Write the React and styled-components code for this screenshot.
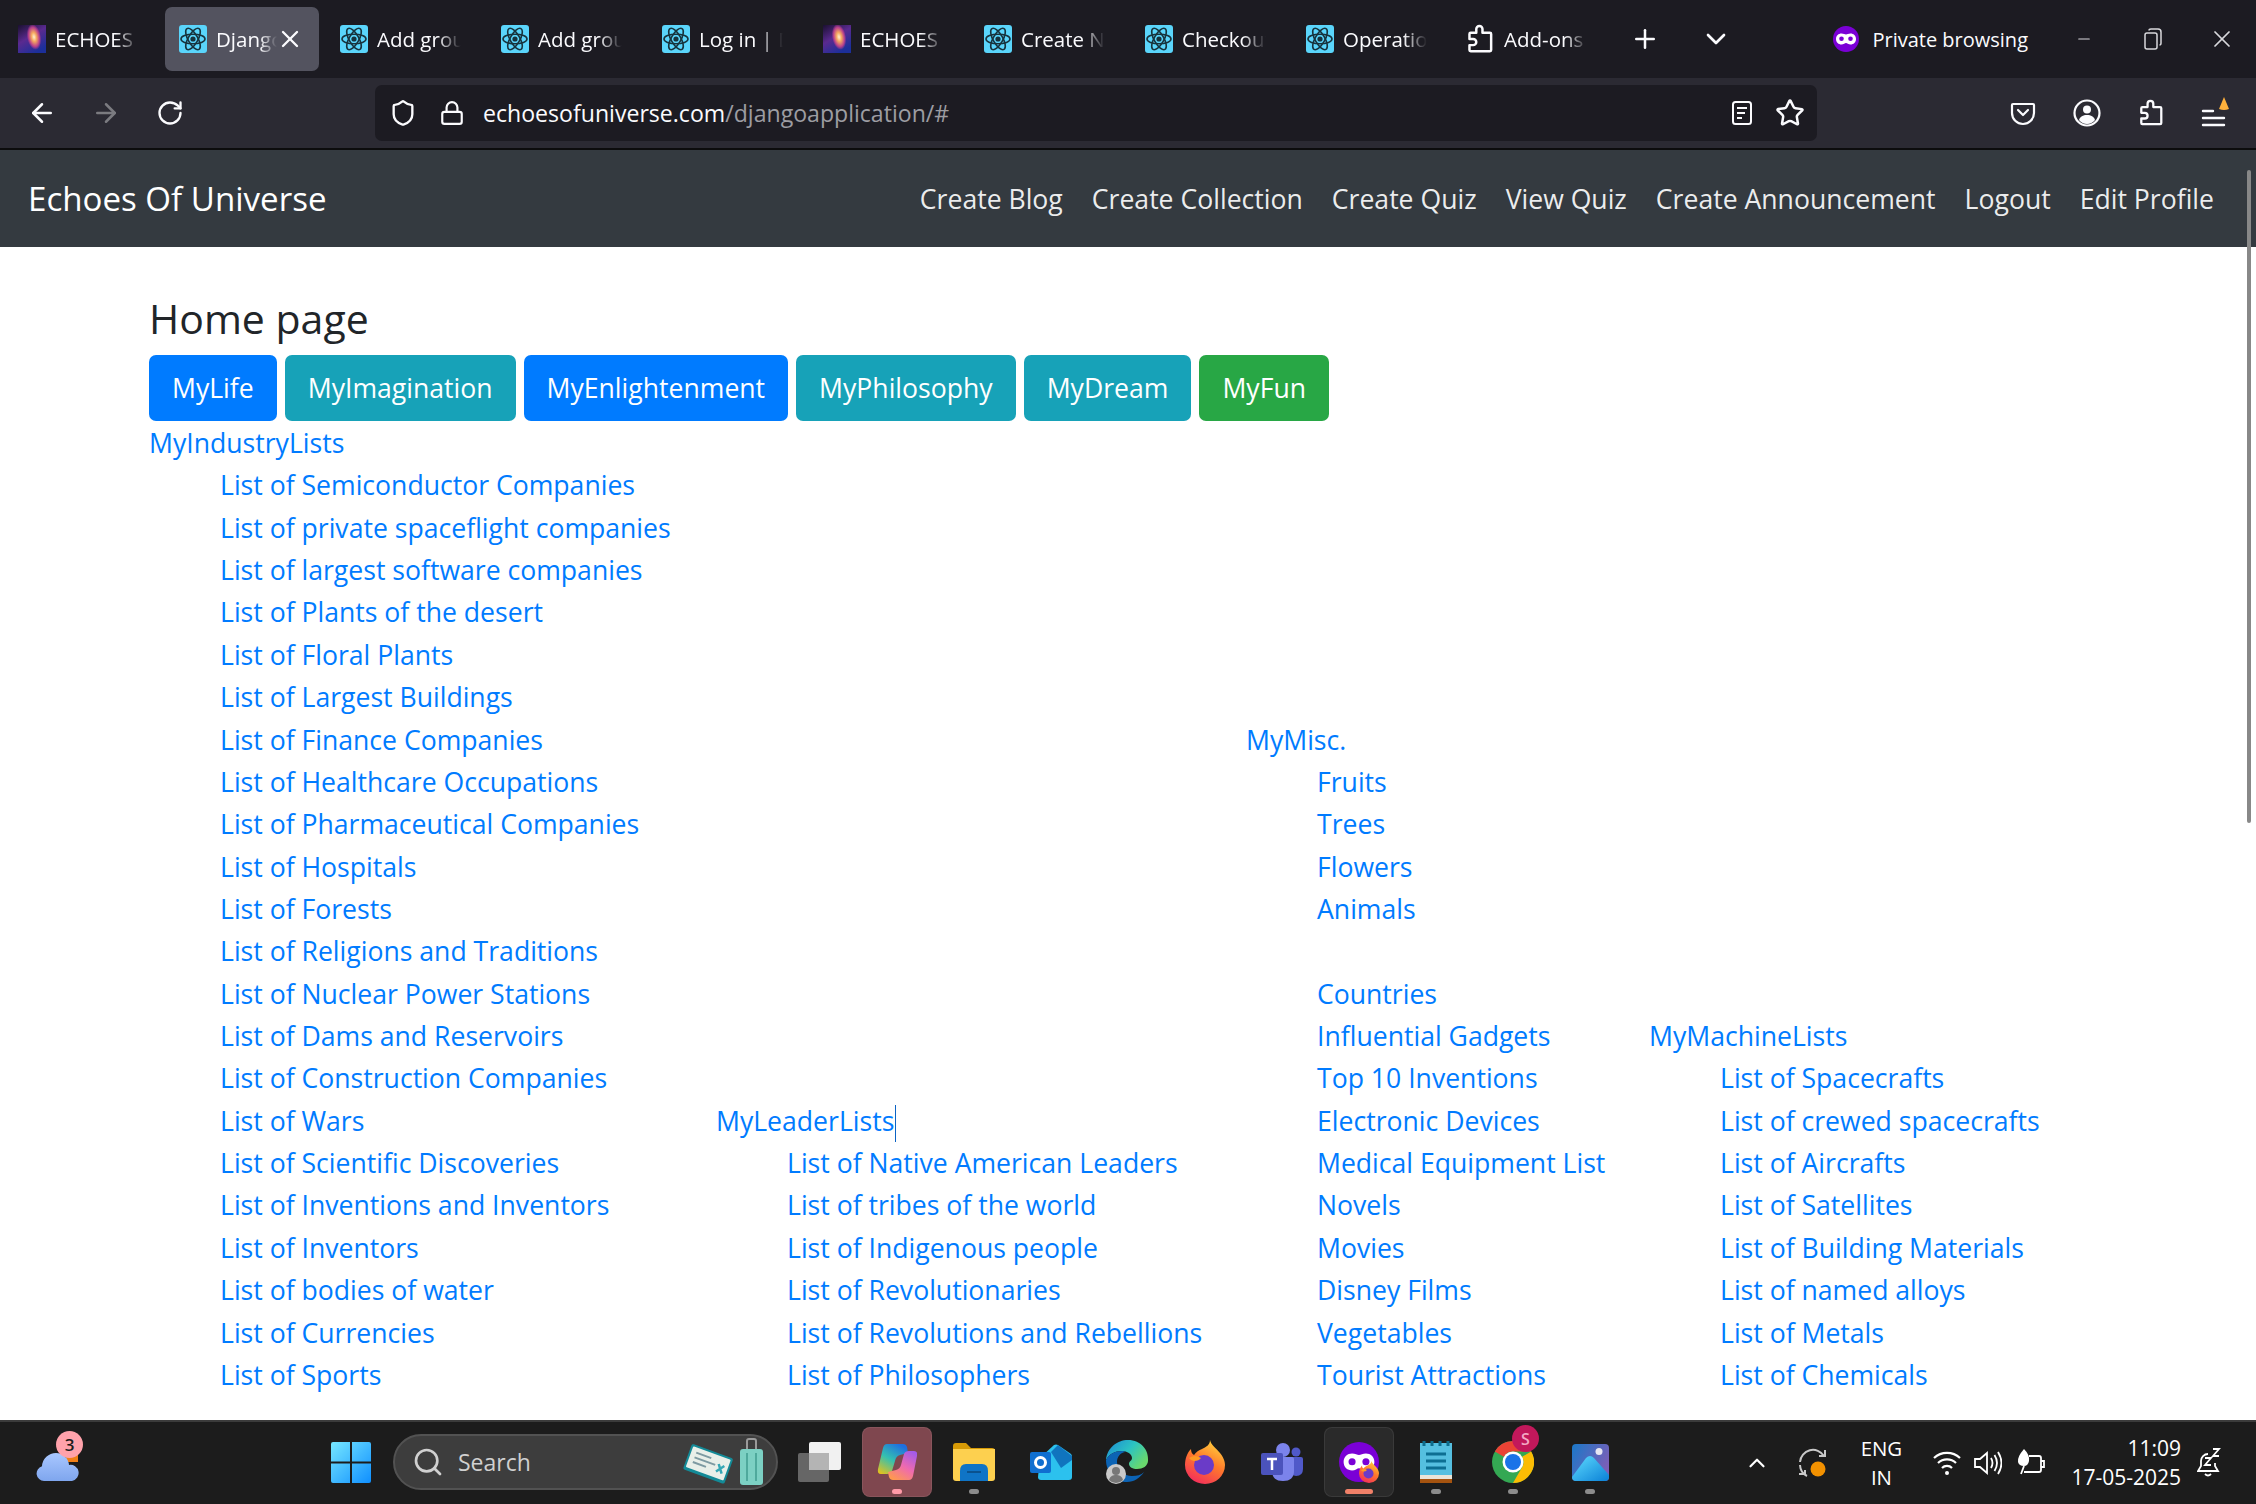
import styled, { createGlobalStyle } from 'styled-components';
import { ArrowLeft, ArrowRight, RotateCw, Shield, Lock, Star, Plus, ChevronDown, ChevronUp, X, Minus, Search } from 'lucide-react';

const Global = createGlobalStyle`
	html, body { margin: 0; padding: 0; background: #fff; }
	* { box-sizing: border-box; }
	body { font-family: "Open Sans", "Noto Sans", sans-serif; }
`;

const Screen = styled.div`
	position: relative;
	width: 2256px;
	height: 1504px;
	display: flex;
	flex-direction: column;
	overflow: hidden;
`;

/* browser chrome */
const TabBar = styled.div`
	height: 78px;
	flex: none;
	display: flex;
	align-items: flex-start;
	gap: 7px;
	padding: 7px 0 0 4px;
	background: #1c1b22;
	color: #fbfbfe;
`;
const Tab = styled.div`
	width: 154px;
	height: 64px;
	flex: none;
	display: flex;
	align-items: center;
	gap: ${(p) => (p.$wide ? '11px' : '9px')};
	padding-left: 14px;
	border-radius: 7px;
	background: ${(p) => (p.$active ? '#53535f' : 'transparent')};
	font-size: 20.5px;
`;
const TabTitle = styled.span`
	display: block;
	width: ${(p) => (p.$active ? '61px' : '84px')};
	overflow: hidden;
	white-space: nowrap;
	-webkit-mask-image: linear-gradient(to right, #000 72%, transparent 100%);
	mask-image: linear-gradient(to right, #000 72%, transparent 100%);
`;
const TabClose = styled.span`
	display: flex;
	margin-left: -10px;
`;
const BarButton = styled.div`
	width: ${(p) => p.$w || 64}px;
	height: ${(p) => p.$h || 64}px;
	flex: none;
	display: flex;
	align-items: center;
	justify-content: center;
	color: ${(p) => p.$color || '#fbfbfe'};
`;
const TabTools = styled.div`
	display: flex;
	align-items: center;
	height: 64px;
	margin-left: 6px;
`;
const Spacer = styled.div`
	flex: 1;
`;
const PrivateBadge = styled.div`
	display: flex;
	align-items: center;
	gap: 13px;
	height: 64px;
	margin-right: 14px;
	font-size: 20px;
`;
const WindowControls = styled.div`
	display: flex;
	height: 64px;
`;
const Toolbar = styled.div`
	height: 72px;
	flex: none;
	display: flex;
	align-items: center;
	padding: 0 9px 0 10px;
	background: #2b2a33;
	border-bottom: 2px solid #0c0c0d;
	color: #fbfbfe;
`;
const UrlBar = styled.div`
	width: 1442px;
	height: 56px;
	margin-left: 173px;
	display: flex;
	align-items: center;
	padding: 0 12px 0 14px;
	border-radius: 7px;
	background: #1c1b22;
`;
const LockSlot = styled.span`
	display: flex;
	margin-left: 22px;
`;
const UrlText = styled.div`
	margin-left: 18px;
	font-size: 23.1px;
	white-space: nowrap;
	span {
		color: #9d9da2;
	}
`;
const UrlIcons = styled.div`
	display: flex;
	align-items: center;
	gap: 22px;
	margin-left: auto;
`;
const ToolbarRight = styled.div`
	display: flex;
	margin-left: auto;
`;

/* site navbar */
const Navbar = styled.nav`
	height: 97px;
	flex: none;
	display: flex;
	align-items: center;
	justify-content: space-between;
	padding: 0 42px 0 28px;
	background: #343a40;
	color: #fff;
`;
const Brand = styled.a`
	font-size: 33.1px;
	color: #fff;
`;
const NavLinks = styled.div`
	display: flex;
	gap: 29px;
`;
const NavLink = styled.a`
	font-size: 26.6px;
	color: rgba(255, 255, 255, 0.92);
`;

/* page body */
const Main = styled.main`
	flex: 1;
	min-height: 0;
	padding: 41px 0 0 149px;
	background: #fff;
	overflow: hidden;
`;
const Title = styled.h3`
	margin: 0 0 7px;
	height: 60px;
	font-size: 41px;
	font-weight: 400;
	line-height: 60px;
	color: #212529;
`;
const ButtonRow = styled.div`
	display: flex;
	gap: 8px;
	margin-bottom: 1px;
`;
const Button = styled.a`
	height: 66px;
	display: flex;
	align-items: center;
	padding: 0 23px;
	border-radius: 7px;
	background: ${(p) => p.$bg};
	color: #fff;
	font-size: 26.6px;
`;
const Columns = styled.div`
	display: flex;
	align-items: flex-end;
`;
const Column = styled.div`
	width: ${(p) => p.$w}px;
	flex: none;
	font-size: 26.6px;
	line-height: 42.36px;
	color: #007bff;
`;
const ColumnHead = styled.a`
	display: block;
	height: 42.36px;
	color: #007bff;
	white-space: nowrap;
`;
const Caret = styled.span`
	display: inline-block;
	width: 1px;
	height: 37px;
	margin-left: 1px;
	vertical-align: middle;
	background: #0b63c4;
`;
const LinkList = styled.ul`
	margin: 0;
	padding: 0 0 0 71px;
	list-style: none;
`;
const LinkItem = styled.li`
	height: 42.36px;
	white-space: nowrap;
`;
const Scrollbar = styled.div`
	position: absolute;
	top: 170px;
	right: 5px;
	width: 4px;
	height: 653px;
	border-radius: 2px;
	background: #888;
`;

/* windows taskbar */
const Taskbar = styled.div`
	height: 84px;
	flex: none;
	display: flex;
	align-items: center;
	border-top: 2px solid #3b3b3b;
	background: #1c1c1c;
	color: #fff;
`;
const WeatherSlot = styled.div`
	position: relative;
	width: 316px;
	flex: none;
	padding: 12px 0 0 36px;
`;
const WeatherBadge = styled.span`
	position: absolute;
	top: -9px;
	left: 56px;
	width: 27px;
	height: 27px;
	border-radius: 50%;
	display: flex;
	align-items: center;
	justify-content: center;
	background: #ffa2ab;
	color: #1c1c1c;
	font-size: 17px;
	font-weight: 600;
`;
const TaskGroup = styled.div`
	display: flex;
	align-items: center;
	gap: 7px;
	margin-top: -2px;
`;
const TaskSlot = styled.div`
	position: relative;
	width: 70px;
	height: 70px;
	display: flex;
	align-items: center;
	justify-content: center;
	border-radius: 8px;
	background: ${(p) => p.$bg || 'transparent'};
	border: 1px solid ${(p) => (p.$bg ? '#ffffff14' : 'transparent')};
`;
const Pip = styled.span`
	position: absolute;
	bottom: 2px;
	left: 50%;
	width: ${(p) => p.$w || 10}px;
	height: 5px;
	margin-left: ${(p) => -(p.$w || 10) / 2}px;
	border-radius: 3px;
	background: ${(p) => p.$color || '#8c8c8c'};
`;
const SearchBox = styled.div`
	position: relative;
	width: 385px;
	height: 56px;
	display: flex;
	align-items: center;
	gap: 14px;
	padding-left: 17px;
	border: 2px solid #525252;
	border-radius: 28px;
	background: #3d3d3d;
	color: #d0d0d0;
	font-size: 23px;
`;
const SearchArt = styled.span`
	position: absolute;
	right: 10px;
	top: 2px;
	display: flex;
`;
const Tray = styled.div`
	margin-left: auto;
	display: flex;
	align-items: center;
	padding-right: 35px;
`;
const TrayIcon = styled.span`
	display: flex;
	margin-left: ${(p) => p.$ml || 0}px;
`;
const LangBox = styled.div`
	width: 60px;
	margin-left: 25px;
	text-align: center;
	font-size: 20.4px;
	line-height: 29px;
`;
const Clock = styled.div`
	margin-left: 26px;
	text-align: right;
	font-size: 21px;
	line-height: 29px;
	white-space: nowrap;
`;
const ChromeBadge = styled.span`
	position: absolute;
	top: -3px;
	right: 8px;
	width: 27px;
	height: 27px;
	border-radius: 50%;
	display: flex;
	align-items: center;
	justify-content: center;
	background: #c2185b;
	color: #f3a9c4;
	font-size: 16px;
	font-weight: 600;
`;
const MaskOverlay = styled.span`
	position: absolute;
	right: 14px;
	bottom: 13px;
	display: flex;
`;

const Atom = () => (
	<svg width="28" height="28" viewBox="0 0 28 28" style={{ flex: 'none' }}>
		<rect width="28" height="28" rx="3" fill="#5ad5fb" />
		<g fill="none" stroke="#17333d" strokeWidth="1.6">
			<ellipse cx="14" cy="14" rx="12" ry="4.8" />
			<ellipse cx="14" cy="14" rx="12" ry="4.8" transform="rotate(60 14 14)" />
			<ellipse cx="14" cy="14" rx="12" ry="4.8" transform="rotate(120 14 14)" />
		</g>
		<circle cx="14" cy="14" r="2.6" fill="#17333d" />
	</svg>
);

const Galaxy = () => (
	<svg width="28" height="28" viewBox="0 0 28 28" style={{ flex: 'none' }}>
		<defs>
			<linearGradient id="galbg" x1="0" y1="0" x2="0.6" y2="1">
				<stop offset="0" stopColor="#1a1030" />
				<stop offset="0.5" stopColor="#5a2a90" />
				<stop offset="1" stopColor="#1c2f9a" />
			</linearGradient>
			<radialGradient id="gal" cx="0.5" cy="0.5" r="0.5">
				<stop offset="0" stopColor="#fff2d0" />
				<stop offset="0.35" stopColor="#f5a860" />
				<stop offset="0.75" stopColor="#b8408c" />
				<stop offset="1" stopColor="#b8408c" stopOpacity="0" />
			</radialGradient>
		</defs>
		<rect width="28" height="28" fill="url(#galbg)" />
		<ellipse cx="16" cy="12" rx="7" ry="13" fill="url(#gal)" transform="rotate(-10 16 12)" />
	</svg>
);

const Puzzle = ({ size = 26 }) => (
	<svg width={size} height={size * 1.15} viewBox="0 0 21 24" fill="none" stroke="#fbfbfe" strokeWidth="2" strokeLinejoin="round" style={{ flex: 'none' }}>
		<path d="M7.5 7V4a2.5 2.5 0 0 1 5 0v3h6a1 1 0 0 1 1 1v13a1 1 0 0 1-1 1H3a1 1 0 0 1-1-1v-4h3a2.5 2.5 0 0 0 0-5H2V8a1 1 0 0 1 1-1z" />
	</svg>
);

const Mask = ({ size = 26 }) => (
	<svg width={size} height={size} viewBox="0 0 26 26" style={{ flex: 'none' }}>
		<circle cx="13" cy="13" r="13" fill="#7a00d6" />
		<path d="M3 13c0-3.400 2.500-5.500 5.500-5.500 2 0 3.400 1 4.500 1s2.500-1 4.500-1c3 0 5.500 2.100 5.500 5.500s-2.500 5.500-5.500 5.500c-2 0-3.400-1.500-4.500-1.500S10.500 18.500 8.500 18.500C5.500 18.500 3 16.400 3 13z" fill="#fff" />
		<circle cx="8.500" cy="12.800" r="2.300" fill="#7a00d6" />
		<circle cx="17.500" cy="12.800" r="2.300" fill="#7a00d6" />
	</svg>
);

const Reader = () => (
	<svg width="22" height="26" viewBox="0 0 22 26" fill="none" stroke="#fbfbfe" strokeWidth="2">
		<rect x="2" y="2" width="18" height="22" rx="2.500" />
		<path d="M6 8h10M6 13h8M6 18h5" />
	</svg>
);

const Pocket = () => (
	<svg width="26" height="26" viewBox="0 0 26 26" fill="none" stroke="#fbfbfe" strokeWidth="2.200" strokeLinecap="round" strokeLinejoin="round">
		<path d="M3 4h20a1 1 0 0 1 1 1v8a11 11 0 0 1-22 0V5a1 1 0 0 1 1-1z" />
		<path d="M8 10l5 5 5-5" />
	</svg>
);

const Profile = () => (
	<svg width="28" height="28" viewBox="0 0 28 28" fill="none" stroke="#fbfbfe" strokeWidth="2.200">
		<circle cx="14" cy="14" r="12.500" />
		<circle cx="14" cy="10.500" r="4" fill="#fbfbfe" stroke="none" />
		<path d="M6 21c1-3.500 4-5 8-5s7 1.500 8 5c-2 2.500-5 4-8 4s-6-1.500-8-4z" fill="#fbfbfe" stroke="none" />
	</svg>
);

const MenuIcon = () => (
	<svg width="30" height="34" viewBox="0 0 30 34">
		<path d="M3 15h10M3 22h21M3 29h21" stroke="#fbfbfe" strokeWidth="2.400" strokeLinecap="round" />
		<path d="M19 13L24 1l5 12q-5 2-10 0z" fill="#ffb13c" />
	</svg>
);

const RestoreIcon = () => (
	<svg width="18" height="22" viewBox="0 0 18 22" fill="none" stroke="#d8d8dc" strokeWidth="1.500">
		<rect x="1" y="5" width="12" height="16" rx="2" />
		<path d="M5 2.500q0-1.500 2-1.500h7q3 0 3 3v11q0 2-1.500 2" />
	</svg>
);

const WinLogo = () => (
	<svg width="40" height="41" viewBox="0 0 40 41">
		<defs>
			<linearGradient id="win" x1="0" y1="0" x2="1" y2="1">
				<stop offset="0" stopColor="#76e7ff" />
				<stop offset="1" stopColor="#0f8fff" />
			</linearGradient>
		</defs>
		<path d="M0 2q0-2 2-2h17v19.500H0zM21 0h17q2 0 2 2v17.500H21zM0 21.500h19V41H2q-2 0-2-2zM21 21.500h19V39q0 2-2 2H21z" fill="url(#win)" />
	</svg>
);

const TravelArt = () => (
	<svg width="84" height="48" viewBox="0 0 84 48">
		<g transform="rotate(20 25 26)">
			<rect x="4" y="12" width="44" height="27" rx="2" fill="#138a97" />
			<rect x="6" y="14" width="40" height="22" rx="1" fill="#e8efe9" />
			<path d="M11 19h16M11 24h22M11 29h14" stroke="#7d9aa2" strokeWidth="2" />
			<path d="M36 22l6 8M42 22l-6 8" stroke="#35a7b5" strokeWidth="2.500" />
		</g>
		<rect x="58" y="11" width="23" height="36" rx="3" fill="#7cd0c3" />
		<path d="M65 11V3q0-2 2-2h5q2 0 2 2v8" fill="none" stroke="#9a9a9a" strokeWidth="2" />
		<path d="M65 15v28M74 15v28" stroke="#4fa99c" strokeWidth="2" />
	</svg>
);

const WeatherIcon = () => (
	<svg width="44" height="30" viewBox="0 0 44 30">
		<defs>
			<linearGradient id="cloud" x1="0" y1="0" x2="0" y2="1">
				<stop offset="0" stopColor="#a9c7ff" />
				<stop offset="1" stopColor="#7fa6ee" />
			</linearGradient>
		</defs>
		<rect x="30" y="0" width="12" height="10" fill="#f07f17" />
		<path d="M8 29a7.500 7.500 0 0 1-2-14.700A14 14 0 0 1 20 1a13 13 0 0 1 13 12 8 8 0 0 1 3 16z" fill="url(#cloud)" />
	</svg>
);

const TaskViewIcon = () => (
	<svg width="44" height="40" viewBox="0 0 44 40">
		<rect x="0" y="11" width="31" height="29" rx="2" fill="#666" />
		<rect x="11" y="0" width="32" height="28" rx="2" fill="#f1f1f1" />
		<rect x="11" y="11" width="20" height="17" fill="#b4b4b4" />
	</svg>
);

const CopilotIcon = () => (
	<svg width="40" height="38" viewBox="0 0 40 38">
		<defs>
			<linearGradient id="cpa" x1="0.7" y1="0" x2="0.1" y2="1">
				<stop offset="0" stopColor="#1f6fe0" />
				<stop offset="0.5" stopColor="#34c0b0" />
				<stop offset="1" stopColor="#e6c21a" />
			</linearGradient>
			<linearGradient id="cpb" x1="0.8" y1="0" x2="0.2" y2="1">
				<stop offset="0" stopColor="#a35be8" />
				<stop offset="0.5" stopColor="#ee6ab0" />
				<stop offset="1" stopColor="#ff9a4d" />
			</linearGradient>
		</defs>
		<path d="M10 1h16q3 0 4 3l1 6-8 2q-4 1-5 6l-3 10q-1 3-5 3H4q-4 0-3-5L6 5q1-4 4-4z" fill="url(#cpa)" />
		<path d="M32 37H16q-3 0-4-3l-1-5 8-2q4-1 5-5l3-11q1-3 5-3h5q4 0 3 5l-4 20q-1 4-4 4z" fill="url(#cpb)" />
	</svg>
);

const FolderIcon = () => (
	<svg width="42" height="38" viewBox="0 0 42 38">
		<path d="M0 3q0-3 3-3h10l5 5h21q3 0 3 3v4H0z" fill="#d79a06" />
		<path d="M0 6h42v29q0 3-3 3H3q-3 0-3-3z" fill="#fdd04f" />
		<path d="M7 38V28q0-7 6-7h16q6 0 6 7v10z" fill="#0f74c6" />
		<path d="M14 29h14" stroke="#0a528f" strokeWidth="2" />
	</svg>
);

const OutlookIcon = () => (
	<svg width="42" height="36" viewBox="0 0 42 36">
		<path d="M10 14L24 1q2-1 4 0l13 9q1 1 1 3v20q0 3-3 3H11q-3 0-3-3z" fill="#2cc1ee" />
		<path d="M21 8l7-7 14 11v4l-11 8z" fill="#0c66b5" opacity="0.85" />
		<rect x="0" y="8" width="21" height="21" rx="2" fill="#0f6fd0" />
		<circle cx="10.500" cy="18.500" r="5" fill="none" stroke="#fff" strokeWidth="3" />
	</svg>
);

const EdgeIcon = () => (
	<svg width="44" height="44" viewBox="0 0 44 44">
		<defs>
			<linearGradient id="edg" x1="0" y1="0" x2="1" y2="0.6">
				<stop offset="0" stopColor="#1b88d6" />
				<stop offset="0.55" stopColor="#2cc3c2" />
				<stop offset="1" stopColor="#69d86d" />
			</linearGradient>
		</defs>
		<path d="M0 20C1 8 11 0 22 0c13 0 21 10 20 21-.3 5-5 8-11 8-4 0-8-2-8-5s3-3 3-6c0-4-5-7-10-7C9 11 3 14 0 20z" fill="url(#edg)" />
		<path d="M0 20c3-6 9-9 16-9 1 0 2 0 3 1-5 1-8 5-8 10 0 8 7 14 15 14 5 0 9-1 12-4-4 6-10 10-17 10C9 42 0 32 0 20z" fill="#0c63b4" />
		<circle cx="10" cy="34" r="10" fill="#c9c9c9" />
		<circle cx="10" cy="31" r="4" fill="#777" />
		<path d="M3 40c1-4 4-5 7-5s6 1 7 5q-3 3-7 3t-7-3z" fill="#777" />
	</svg>
);

const FirefoxIcon = ({ size = 40 }) => (
	<svg width={size} height={size * 1.1} viewBox="0 0 40 44">
		<defs>
			<linearGradient id="ffx" x1="0.7" y1="0" x2="0.2" y2="1">
				<stop offset="0" stopColor="#ffd03c" />
				<stop offset="0.45" stopColor="#ff7a2b" />
				<stop offset="1" stopColor="#f2285f" />
			</linearGradient>
		</defs>
		<path d="M25 0c1 5 6 8 10 13 4 5 5 9 5 12a20 19 0 0 1-40 0C0 19 2 13 6 9c0 3 1 5 3 6 2-3 5-5 8-6 4-2 8-4 8-9z" fill="url(#ffx)" />
		<circle cx="19" cy="25" r="10" fill="#6a3bc8" />
		<path d="M4 18q6-4 12 0-2 3-7 3-3 0-5-3z" fill="#ff9a24" />
	</svg>
);

const TeamsIcon = () => (
	<svg width="42" height="38" viewBox="0 0 42 38">
		<circle cx="22" cy="7" r="7" fill="#7b83eb" />
		<circle cx="35" cy="9" r="4.500" fill="#5059c9" />
		<path d="M28 14h12q2 0 2 2v10q0 7-7 7-4 0-7-3z" fill="#5059c9" />
		<path d="M11 14h20q2 0 2 2v12q0 10-11 10-11 0-11-10z" fill="#7b83eb" />
		<rect x="0" y="10" width="22" height="22" rx="2" fill="#4b53bc" />
		<path d="M6 16h10M11 16v11" stroke="#fff" strokeWidth="2.500" />
	</svg>
);

const NotepadIcon = () => (
	<svg width="32" height="42" viewBox="0 0 32 42">
		<rect x="0" y="2" width="32" height="34" fill="#55bfe0" />
		<rect x="0" y="34" width="32" height="4" fill="#e9e4d8" />
		<rect x="0" y="38" width="32" height="4" fill="#a5530f" />
		<path d="M4 0v5M12 0v5M20 0v5M28 0v5" stroke="#0e6c8c" strokeWidth="3" />
		<path d="M6 13h20M6 20h20M6 27h20" stroke="#0d6f93" strokeWidth="3" />
	</svg>
);

const ChromeIcon = () => (
	<svg width="42" height="42" viewBox="0 0 42 42">
		<circle cx="21" cy="21" r="21" fill="#34a853" />
		<path d="M21 0a21 21 0 0 1 18.200 10.500H21a10.500 10.500 0 0 0-9.100 5.250L2.800 10.500A21 21 0 0 1 21 0z" fill="#ea4335" />
		<path d="M39.200 10.500A21 21 0 0 1 21 42l9.100-15.750A10.500 10.500 0 0 0 30.100 15.750z" fill="#fbbc04" />
		<circle cx="21" cy="21" r="10.500" fill="#fff" />
		<circle cx="21" cy="21" r="8" fill="#1a73e8" />
	</svg>
);

const PhotosIcon = () => (
	<svg width="37" height="37" viewBox="0 0 37 37">
		<defs>
			<linearGradient id="pho" x1="0" y1="0" x2="1" y2="0.5">
				<stop offset="0" stopColor="#1a78c8" />
				<stop offset="1" stopColor="#7a5fb8" />
			</linearGradient>
			<linearGradient id="pho2" x1="0" y1="0" x2="1" y2="1">
				<stop offset="0" stopColor="#5fdcff" />
				<stop offset="1" stopColor="#0a80d6" />
			</linearGradient>
		</defs>
		<rect width="37" height="37" rx="4" fill="url(#pho)" />
		<circle cx="27" cy="7.500" r="3.500" fill="#e6e6f2" />
		<path d="M0 33L14 14q4-4 8 0l15 17v2q0 4-4 4H4q-4 0-4-4z" fill="url(#pho2)" />
	</svg>
);

const SyncIcon = () => (
	<svg width="28" height="32" viewBox="0 0 28 32" fill="none" stroke="#c8c8c8" strokeWidth="2">
		<path d="M26 9A13 13 0 0 0 2 15" />
		<path d="M21 9h6V3" />
		<path d="M2 18a13 13 0 0 0 7 11" />
		<path d="M1 27h6v-4" />
		<circle cx="20" cy="22" r="7.500" fill="#f29100" stroke="none" />
	</svg>
);

const WifiIcon = () => (
	<svg width="28" height="30" viewBox="0 0 28 30" fill="none" stroke="#fff" strokeWidth="2.200">
		<path d="M1 10a19 19 0 0 1 26 0M5 15a13 13 0 0 1 18 0M9 20a7 7 0 0 1 10 0" />
		<circle cx="14" cy="25" r="2" fill="#fff" stroke="none" />
	</svg>
);

const SoundIcon = () => (
	<svg width="28" height="30" viewBox="0 0 28 30" fill="none" stroke="#fff" strokeWidth="1.800">
		<path d="M1 11h5l7-6v20l-7-6H1z" />
		<path d="M17 10q3 5 0 10M20.500 7q5 8 0 16M24 4q7 11 0 22" />
	</svg>
);

const BatteryIcon = () => (
	<svg width="30" height="30" viewBox="0 0 30 30" fill="none" stroke="#fff" strokeWidth="1.800">
		<path d="M14 8h10q2 0 2 2v12q0 2-2 2H9" />
		<path d="M26 13h3v6h-3" />
		<path d="M9 1q6 6 5 12-1 5-5 5-5 0-6-4-1-5 6-13z" fill="#fff" stroke="none" />
		<path d="M9 18l-3 8" />
	</svg>
);

const BellIcon = () => (
	<svg width="24" height="32" viewBox="0 0 24 32" fill="none" stroke="#fff" strokeWidth="1.800">
		<path d="M11 7a7 7 0 0 0-7 7v5l-3 5h20l-3-5v-3" />
		<path d="M8 27q3 3 6 0" />
		<path d="M8 11h6l-6 7h6" />
		<path d="M16 2h6l-6 7h6" />
	</svg>
);

const tabs = [
	{ title: 'ECHOES', icon: <Galaxy /> },
	{ title: 'Django', icon: <Atom />, active: true },
	{ title: 'Add grou', icon: <Atom /> },
	{ title: 'Add grou', icon: <Atom /> },
	{ title: 'Log in | D', icon: <Atom /> },
	{ title: 'ECHOES', icon: <Galaxy /> },
	{ title: 'Create N', icon: <Atom /> },
	{ title: 'Checkout', icon: <Atom /> },
	{ title: 'Operation', icon: <Atom /> },
	{ title: 'Add-ons', icon: <Puzzle />, wide: true },
];

const navItems = ['Create Blog', 'Create Collection', 'Create Quiz', 'View Quiz', 'Create Announcement', 'Logout', 'Edit Profile'];

const buttons = [
	{ label: 'MyLife', bg: '#007bff' },
	{ label: 'MyImagination', bg: '#17a2b8' },
	{ label: 'MyEnlightenment', bg: '#007bff' },
	{ label: 'MyPhilosophy', bg: '#17a2b8' },
	{ label: 'MyDream', bg: '#17a2b8' },
	{ label: 'MyFun', bg: '#28a745' },
];

const columns = [
	{
		head: 'MyIndustryLists',
		width: 567,
		items: [
			'List of Semiconductor Companies', 'List of private spaceflight companies', 'List of largest software companies',
			'List of Plants of the desert', 'List of Floral Plants', 'List of Largest Buildings', 'List of Finance Companies',
			'List of Healthcare Occupations', 'List of Pharmaceutical Companies', 'List of Hospitals', 'List of Forests',
			'List of Religions and Traditions', 'List of Nuclear Power Stations', 'List of Dams and Reservoirs',
			'List of Construction Companies', 'List of Wars', 'List of Scientific Discoveries', 'List of Inventions and Inventors',
			'List of Inventors', 'List of bodies of water', 'List of Currencies', 'List of Sports',
		],
	},
	{
		head: 'MyLeaderLists',
		width: 530,
		caret: true,
		items: [
			'List of Native American Leaders', 'List of tribes of the world', 'List of Indigenous people', 'List of Revolutionaries',
			'List of Revolutions and Rebellions', 'List of Philosophers',
		],
	},
	{
		head: 'MyMisc.',
		width: 403,
		items: [
			'Fruits', 'Trees', 'Flowers', 'Animals', '', 'Countries', 'Influential Gadgets', 'Top 10 Inventions', 'Electronic Devices',
			'Medical Equipment List', 'Novels', 'Movies', 'Disney Films', 'Vegetables', 'Tourist Attractions',
		],
	},
	{
		head: 'MyMachineLists',
		width: 500,
		items: [
			'List of Spacecrafts', 'List of crewed spacecrafts', 'List of Aircrafts', 'List of Satellites', 'List of Building Materials',
			'List of named alloys', 'List of Metals', 'List of Chemicals',
		],
	},
];

export default function App() {
	return (
		<Screen>
			<Global />
			<TabBar>
				{tabs.map((t, i) => (
					<Tab key={i} $active={t.active} $wide={t.wide}>
						{t.icon}
						<TabTitle $active={t.active}>{t.title}</TabTitle>
						{t.active && (
							<TabClose>
								<X size={28} strokeWidth={2} />
							</TabClose>
						)}
					</Tab>
				))}
				<TabTools>
					<BarButton $w={50}>
						<Plus size={30} strokeWidth={2} />
					</BarButton>
					<BarButton $w={92}>
						<ChevronDown size={32} strokeWidth={2} />
					</BarButton>
				</TabTools>
				<Spacer />
				<PrivateBadge>
					<Mask />
					Private browsing
				</PrivateBadge>
				<WindowControls>
					<BarButton $w={69} $color="#d8d8dc">
						<Minus size={18} strokeWidth={1.5} />
					</BarButton>
					<BarButton $w={69}>
						<RestoreIcon />
					</BarButton>
					<BarButton $w={69} $color="#d8d8dc">
						<X size={28} strokeWidth={1.5} />
					</BarButton>
				</WindowControls>
			</TabBar>

			<Toolbar>
				<BarButton>
					<ArrowLeft size={30} strokeWidth={2} />
				</BarButton>
				<BarButton $color="#7b7b80">
					<ArrowRight size={30} strokeWidth={2} />
				</BarButton>
				<BarButton>
					<RotateCw size={28} strokeWidth={2} />
				</BarButton>
				<UrlBar>
					<Shield size={28} strokeWidth={2} />
					<LockSlot>
						<Lock size={26} strokeWidth={2} />
					</LockSlot>
					<UrlText>
						echoesofuniverse.com<span>/djangoapplication/#</span>
					</UrlText>
					<UrlIcons>
						<Reader />
						<Star size={30} strokeWidth={2} />
					</UrlIcons>
				</UrlBar>
				<ToolbarRight>
					<BarButton><Pocket /></BarButton>
					<BarButton><Profile /></BarButton>
					<BarButton><Puzzle size={24} /></BarButton>
					<BarButton><MenuIcon /></BarButton>
				</ToolbarRight>
			</Toolbar>

			<Navbar>
				<Brand>Echoes Of Universe</Brand>
				<NavLinks>
					{navItems.map((n) => (
						<NavLink key={n}>{n}</NavLink>
					))}
				</NavLinks>
			</Navbar>

			<Main>
				<Title>Home page</Title>
				<ButtonRow>
					{buttons.map((b) => (
						<Button key={b.label} $bg={b.bg}>{b.label}</Button>
					))}
				</ButtonRow>
				<Columns>
					{columns.map((c) => (
						<Column key={c.head} $w={c.width}>
							<ColumnHead>
								{c.head}
								{c.caret && <Caret />}
							</ColumnHead>
							<LinkList>
								{c.items.map((item, i) => (
									<LinkItem key={i}>{item}</LinkItem>
								))}
							</LinkList>
						</Column>
					))}
				</Columns>
			</Main>

			<Taskbar>
				<WeatherSlot>
					<WeatherIcon />
					<WeatherBadge>3</WeatherBadge>
				</WeatherSlot>
				<TaskGroup>
					<TaskSlot><WinLogo /></TaskSlot>
					<SearchBox>
						<Search size={32} strokeWidth={2} />
						Search
						<SearchArt><TravelArt /></SearchArt>
					</SearchBox>
					<TaskSlot><TaskViewIcon /></TaskSlot>
					<TaskSlot $bg="#7f474f"><CopilotIcon /><Pip $color="#ff9aa8" /></TaskSlot>
					<TaskSlot><FolderIcon /><Pip /></TaskSlot>
					<TaskSlot><OutlookIcon /></TaskSlot>
					<TaskSlot><EdgeIcon /></TaskSlot>
					<TaskSlot><FirefoxIcon /></TaskSlot>
					<TaskSlot><TeamsIcon /></TaskSlot>
					<TaskSlot $bg="#2a2a2a">
						<Mask size={40} />
						<MaskOverlay><FirefoxIcon size={20} /></MaskOverlay>
						<Pip $w={28} $color="#f08068" />
					</TaskSlot>
					<TaskSlot><NotepadIcon /><Pip /></TaskSlot>
					<TaskSlot>
						<ChromeIcon />
						<ChromeBadge>S</ChromeBadge>
						<Pip />
					</TaskSlot>
					<TaskSlot><PhotosIcon /><Pip /></TaskSlot>
				</TaskGroup>
				<Tray>
					<ChevronUp size={26} strokeWidth={2} />
					<TrayIcon $ml={28}><SyncIcon /></TrayIcon>
					<LangBox>ENG<br />IN</LangBox>
					<TrayIcon $ml={22}><WifiIcon /></TrayIcon>
					<TrayIcon $ml={13}><SoundIcon /></TrayIcon>
					<TrayIcon $ml={13}><BatteryIcon /></TrayIcon>
					<Clock>11:09<br />17-05-2025</Clock>
					<TrayIcon $ml={16}><BellIcon /></TrayIcon>
				</Tray>
			</Taskbar>

			<Scrollbar />
		</Screen>
	);
}
